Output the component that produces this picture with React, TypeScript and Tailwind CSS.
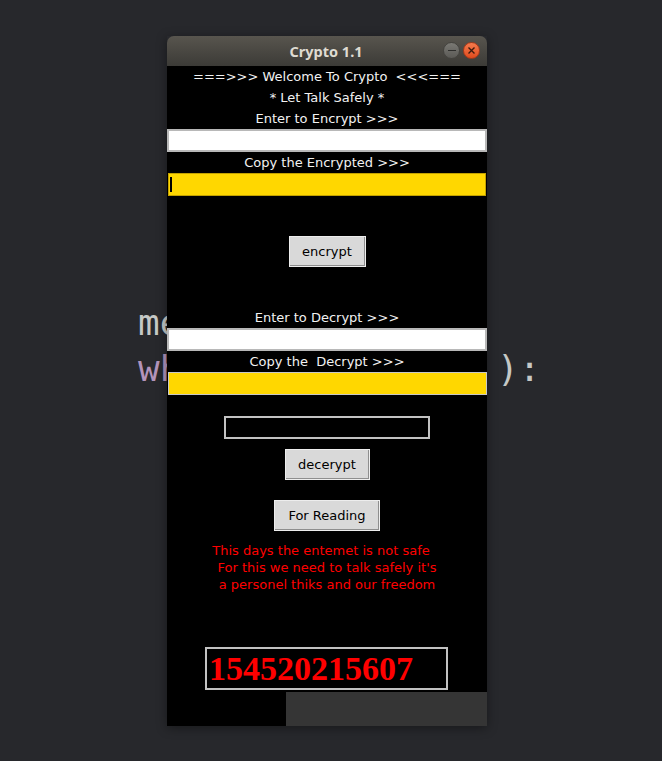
import React from "react";

const dj = { fontFamily: '"DejaVu Sans", Verdana, sans-serif' };

function Label({ children }: { children: React.ReactNode }) {
  return (
    <div
      className="h-[21px] flex items-center justify-center text-[13px] leading-none text-[#f2f2f2] whitespace-pre"
      style={dj}
    >
      {children}
    </div>
  );
}

function TkButton({ children, w }: { children: React.ReactNode; w: string }) {
  return (
    <div
      className={`${w} h-[31px] self-center flex items-center justify-center bg-[#d9d9d9] border border-[#ededed] shadow-[inset_-1px_-1px_0_#8e8e8e] text-[13px] leading-none text-black`}
      style={dj}
    >
      {children}
    </div>
  );
}

export default function App() {
  return (
    <div className="relative w-[662px] h-[761px] bg-[#27282c] overflow-hidden">
      {/* background code editor fragments */}
      <div
        className="absolute left-[138px] top-[305px] text-[36px] leading-[36px] text-[#c5c8c6] whitespace-pre"
        style={{ fontFamily: '"DejaVu Sans Mono", monospace' }}
      >
        me
      </div>
      <div
        className="absolute left-[138px] top-[351px] text-[36px] leading-[36px] text-[#b294bb] whitespace-pre"
        style={{ fontFamily: '"DejaVu Sans Mono", monospace' }}
      >
        wh
      </div>
      <div
        className="absolute left-[497px] top-[351px] text-[36px] leading-[36px] text-[#c5c8c6] whitespace-pre"
        style={{ fontFamily: '"DejaVu Sans Mono", monospace' }}
      >
        ):
      </div>

      {/* window */}
      <div className="absolute left-[167px] top-[36px] w-[320px] flex flex-col shadow-[0_2px_10px_rgba(0,0,0,0.4)]">
        <div className="relative h-[30px] rounded-t-[7px] bg-gradient-to-b from-[#58554e] to-[#3c3b37] flex items-center justify-center">
          <span
            className="text-[14.5px] font-bold text-[#dfdbd2] leading-none ml-[-2px]"
            style={{ fontFamily: '"Noto Sans", "DejaVu Sans", sans-serif' }}
          >
            Crypto 1.1
          </span>
          <div className="absolute right-[7px] top-[6px] flex gap-[3px]">
            <div className="w-[17px] h-[17px] rounded-full bg-gradient-to-b from-[#7a7974] to-[#5b5a56] border border-[#44433f] flex items-center justify-center">
              <div className="w-[8px] h-[1.5px] bg-[#2e2e2c]" />
            </div>
            <div className="w-[17px] h-[17px] rounded-full bg-gradient-to-b from-[#f47a4c] to-[#df4b1c] border border-[#a8391a] flex items-center justify-center">
              <svg width="9" height="9" viewBox="0 0 9 9">
                <path d="M1.5 1.5 L7.5 7.5 M7.5 1.5 L1.5 7.5" stroke="#3a1a0e" strokeWidth="1.4" />
              </svg>
            </div>
          </div>
        </div>

        <div className="h-[660px] bg-black flex flex-col">
          <Label>===&gt;&gt;&gt; Welcome To Crypto  &lt;&lt;&lt;===</Label>
          <Label>* Let Talk Safely *</Label>
          <Label>Enter to Encrypt &gt;&gt;&gt;</Label>
          <div className="h-[23px] bg-white border-2 border-[#b8b8b8]" />
          <Label>Copy the Encrypted &gt;&gt;&gt;</Label>
          <div className="relative h-[23px] mx-px bg-[#ffd700] border border-[#c4a200]">
            <div className="absolute left-[1px] top-[3px] w-[2px] h-[15px] bg-black" />
          </div>
          <div className="mt-[40px] flex flex-col">
            <TkButton w="w-[77px]">encrypt</TkButton>
          </div>
          <div className="mt-[40px]">
            <Label>Enter to Decrypt &gt;&gt;&gt;</Label>
          </div>
          <div className="h-[23px] bg-white border-2 border-[#b8b8b8]" />
          <Label>Copy the  Decrypt &gt;&gt;&gt;</Label>
          <div className="h-[23px] ml-px bg-[#ffd700] border border-[#c8c8c8]" />
          <div className="mt-[21px] w-[206px] h-[23px] self-center bg-black border-2 border-[#c2c2c2]" />
          <div className="mt-[10px] flex flex-col">
            <TkButton w="w-[85px]">decerypt</TkButton>
          </div>
          <div className="mt-[20px] flex flex-col">
            <TkButton w="w-[106px]">For Reading</TkButton>
          </div>
          <div
            className="mt-[11px] flex flex-col items-center text-[13px] leading-[17px] text-[#ff0000] whitespace-pre"
            style={dj}
          >
            <div className="pr-[12px]">This days the entemet is not safe</div>
            <div>For this we need to talk safely it's</div>
            <div>a personel thiks and our freedom</div>
          </div>
          <div className="mt-[54px] ml-[38px] w-[243px] h-[43px] bg-black border-2 border-[#c2c2c2] pl-[2px] pt-[3px]">
            <span
              className="text-[34px] leading-none font-bold text-[#ff0000]"
              style={{ fontFamily: '"Liberation Serif", "Times New Roman", serif' }}
            >
              154520215607
            </span>
          </div>
          <div className="mt-[2px] ml-[119px] w-[201px] h-[34px] bg-[#353535]" />
        </div>
      </div>
    </div>
  );
}
